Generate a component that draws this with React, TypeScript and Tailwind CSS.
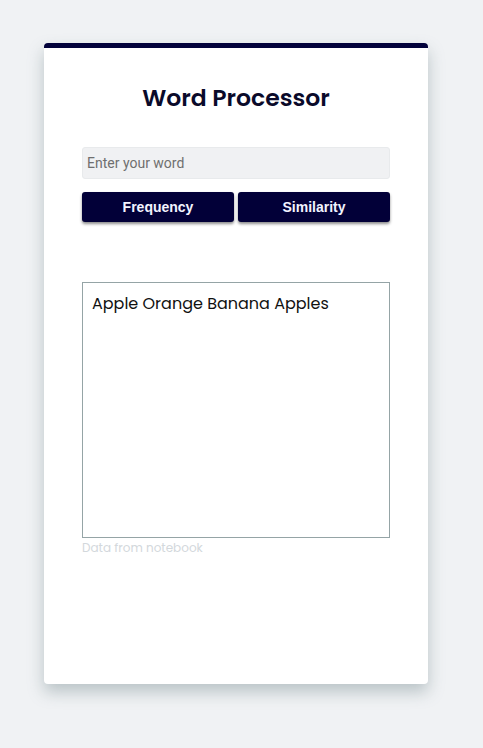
import React, { useState } from 'react';

export default function App() {
  const [word, setWord] = useState('');

  return (
    <div className="min-h-screen w-full bg-[#f0f2f4] pt-[43px]" style={{ fontFamily: 'Poppins, Inter, "Noto Sans", sans-serif' }}>
      <div className="ml-[44px] w-[384px] h-[641px] bg-white rounded-[4px] border-t-[5px] border-[#03023b] shadow-[0_8px_16px_rgba(120,140,145,0.45)] px-[38px] pt-[33px]">
        <h1 className="text-center text-[23.5px] leading-[34px] font-semibold text-[#0a0a2a]">Word Processor</h1>

        <div className="mt-[32px]">
          <input
            value={word}
            onChange={e => setWord(e.target.value)}
            placeholder="Enter your word"
            className="w-full h-[32px] rounded-[3px] bg-[#f0f1f3] border border-[#e8eaec] px-[4px] text-[14px] text-[#333] placeholder:text-[#6f6f6f] outline-none"
            style={{ fontFamily: 'Roboto, Arial, sans-serif' }}
          />
          <div className="mt-[13px] flex gap-[4px]" style={{ fontFamily: '"Liberation Sans", Arial, sans-serif' }}>
            <button className="flex-1 h-[30px] rounded-[3px] bg-[#020038] text-[#f2f4ff] text-[14px] font-bold shadow-[0_2px_3px_rgba(0,0,0,0.45)]">Frequency</button>
            <button className="flex-1 h-[30px] rounded-[3px] bg-[#020038] text-[#f2f4ff] text-[14px] font-bold shadow-[0_2px_3px_rgba(0,0,0,0.45)]">Similarity</button>
          </div>
        </div>

        <div className="mt-[60px] h-[256px] border border-[#95a4a6] px-[9px] pt-[9px]">
          <p className="text-[16px] text-[#111]">Apple Orange Banana Apples</p>
        </div>
        <p className="mt-[1px] text-[12px] text-[#d3d8dc]">Data from notebook</p>
      </div>
    </div>
  );
}
